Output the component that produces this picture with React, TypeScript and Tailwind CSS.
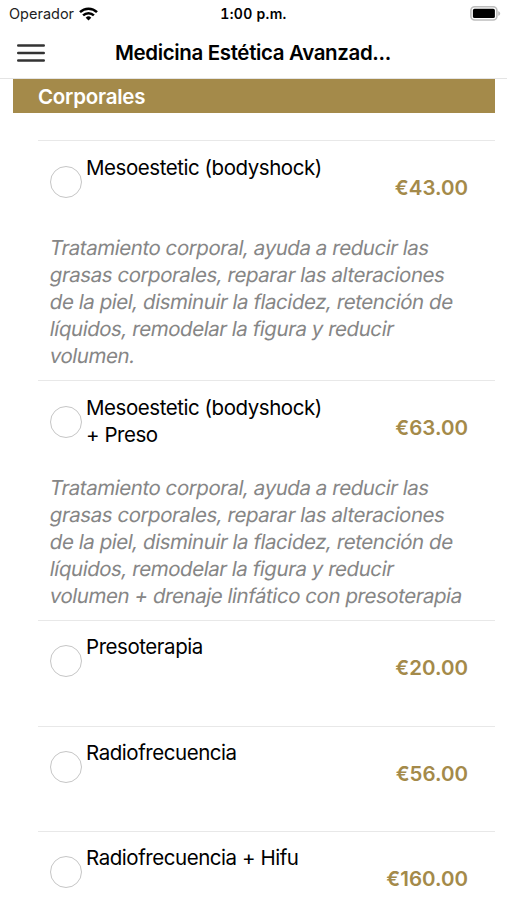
import React from 'react';

interface Treatment { name: string; price: string; description?: string[]; }

const TREATMENTS: Treatment[] = [
  {
    name: 'Mesoestetic (bodyshock)',
    price: '€43.00',
    description: [
      'Tratamiento corporal, ayuda a reducir las',
      'grasas corporales, reparar las alteraciones',
      'de la piel, disminuir la flacidez, retención de',
      'líquidos, remodelar la figura y reducir',
      'volumen.',
    ],
  },
  {
    name: 'Mesoestetic (bodyshock)\n+ Preso',
    price: '€63.00',
    description: [
      'Tratamiento corporal, ayuda a reducir las',
      'grasas corporales, reparar las alteraciones',
      'de la piel, disminuir la flacidez, retención de',
      'líquidos, remodelar la figura y reducir',
      'volumen + drenaje linfático con presoterapia',
    ],
  },
  { name: 'Presoterapia', price: '€20.00' },
  { name: 'Radiofrecuencia', price: '€56.00' },
  { name: 'Radiofrecuencia + Hifu', price: '€160.00' },
];

function MenuIcon() {
  return (
    <svg width="28" height="18" viewBox="0 0 28 18" stroke="#333" strokeWidth="2.4" strokeLinecap="round">
      <path d="M1.2 1.5H26.8M1.2 9H26.8M1.2 16.5H26.8" />
    </svg>
  );
}

function WifiIcon() {
  return (
    <svg width="19" height="14" viewBox="0 0 19 14" fill="none" stroke="#000" strokeWidth="2.5">
      <path d="M1 5.1a12.2 12.2 0 0 1 17 0" />
      <path d="M4.1 8.3a7.8 7.8 0 0 1 10.8 0" />
      <path d="M9.5 13.6 6.7 10.7a4 4 0 0 1 5.6 0Z" fill="#000" stroke="none" />
    </svg>
  );
}

function BatteryIcon() {
  return (
    <svg width="31" height="15" viewBox="0 0 31 15">
      <rect x="0.9" y="0.8" width="26" height="13.2" rx="3.8" fill="#fff" stroke="#bdbdbd" strokeWidth="1.6" />
      <rect x="2.9" y="2.8" width="22" height="9.2" rx="1.6" fill="#000" />
      <path d="M28.2 5.2c1.3.4 2 1.2 2 2.3s-.7 1.9-2 2.3Z" fill="#bdbdbd" />
    </svg>
  );
}

function StatusBar() {
  return (
    <div className="grid grid-cols-3 items-center h-[27px] px-[9px]">
      <div className="flex items-center gap-[5px]">
        <span className="text-[14.5px] leading-5 text-[#222]">Operador</span>
        <WifiIcon />
      </div>
      <span className="text-center text-[14px] leading-5 font-semibold tabular-nums tracking-[0.3px]">1:00 p.m.</span>
      <div className="flex justify-end -mr-[3px]"><BatteryIcon /></div>
    </div>
  );
}

function TreatmentRow({ name, price, description }: Treatment) {
  return (
    <li className={`border-t border-[#e8e8e8] pl-3 pr-[27px] ${description ? 'h-[240px]' : 'h-[105.5px]'}`}>
      <div className={`flex items-start h-[94px] ${description ? 'pt-[13px]' : 'pt-3'}`}>
        <button className="shrink-0 mt-3 size-8 rounded-full border-[1.5px] border-[#c6c6c6]" />
        <span className="ml-1 flex-1 whitespace-pre text-[20.5px] leading-[27px] tracking-[-0.45px]">{name}</span>
        <span className={`text-[20.5px] leading-[27px] font-semibold text-[#a48a4a] ${description ? 'mt-5' : 'mt-[21px]'}`}>{price}</span>
      </div>
      {description && (
        <p className="text-[20.5px] leading-[26.9px] tracking-[-0.45px] text-[#868686]">
          {description.map(line => (
            <span key={line} className="block whitespace-pre -skew-x-[10deg]">{line}</span>
          ))}
        </p>
      )}
    </li>
  );
}

const App: React.FC = () => {
  return (
    <div className="w-[507px] h-[900px] overflow-hidden bg-white text-black font-[Inter,sans-serif]">
      <StatusBar />
      <header className="flex items-center h-[52px] pl-[17px] border-b border-[#e4e4e4]">
        <button className="w-7"><MenuIcon /></button>
        <h1 className="ml-[70px] text-[20.5px] leading-7 font-semibold tracking-[-0.36px]">Medicina Estética Avanzad...</h1>
      </header>

      <main className="pl-[13px] pr-3">
        <h2 className="h-[34px] pl-[25px] bg-[#a48a4a] text-[20.5px] leading-[35px] font-semibold tracking-[-0.25px] text-white">Corporales</h2>
        <ul className="mt-[27px] ml-[25px]">
          {TREATMENTS.map(t => <TreatmentRow key={t.name} {...t} />)}
        </ul>
      </main>
    </div>
  );
};

export default App;
